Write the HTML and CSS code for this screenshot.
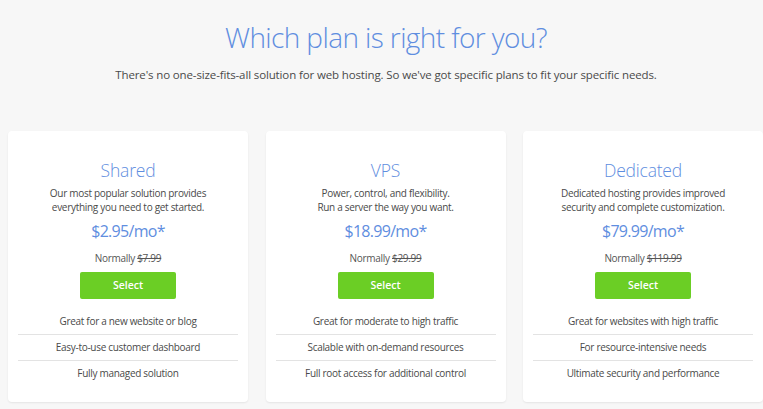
FILE: index.html
```html
<!DOCTYPE html>
<html lang="en">
<head>
<meta charset="utf-8">
<title>Plans</title>
<link rel="stylesheet" href="styles.css">
</head>
<body>
<div class="page">
<header class="intro">
  <h1 class="intro-title">Which plan is right for you?</h1>
  <p class="intro-sub">There's no one-size-fits-all solution for web hosting. So we've got specific plans to fit your specific needs.</p>
</header>
<main class="plans">
  <section class="plan">
    <h2 class="plan-name">Shared</h2>
    <p class="plan-desc">Our most popular solution provides<br>everything you need to get started.</p>
    <p class="plan-price">$2.95/mo*</p>
    <p class="plan-normal">Normally <s>$7.99</s></p>
    <a class="plan-btn" href="#">Select</a>
    <ul class="plan-features">
      <li>Great for a new website or blog</li>
      <li>Easy-to-use customer dashboard</li>
      <li>Fully managed solution</li>
    </ul>
  </section>
  <section class="plan">
    <h2 class="plan-name">VPS</h2>
    <p class="plan-desc">Power, control, and flexibility.<br>Run a server the way you want.</p>
    <p class="plan-price">$18.99/mo*</p>
    <p class="plan-normal">Normally <s>$29.99</s></p>
    <a class="plan-btn" href="#">Select</a>
    <ul class="plan-features">
      <li>Great for moderate to high traffic</li>
      <li>Scalable with on-demand resources</li>
      <li>Full root access for additional control</li>
    </ul>
  </section>
  <section class="plan">
    <h2 class="plan-name">Dedicated</h2>
    <p class="plan-desc">Dedicated hosting provides improved<br>security and complete customization.</p>
    <p class="plan-price">$79.99/mo*</p>
    <p class="plan-normal">Normally <s>$119.99</s></p>
    <a class="plan-btn" href="#">Select</a>
    <ul class="plan-features">
      <li>Great for websites with high traffic</li>
      <li>For resource-intensive needs</li>
      <li>Ultimate security and performance</li>
    </ul>
  </section>
</main>
</div>
</body>
</html>
```
FILE: styles.css
```css
* { box-sizing: border-box; }
html, body { margin: 0; padding: 0; }
body {
  background: #f7f7f7;
  font-family: "Open Sans", "Liberation Sans", sans-serif;
  color: #555;
  height: 409px;
  overflow: hidden;
}
.page {
  width: 772px;
}
.intro {
  text-align: center;
  padding-top: 17px;
}
.intro-title {
  margin: 0;
  font-weight: 300;
  font-size: 28px;
  line-height: 40px;
  color: #5f8ee0;
  letter-spacing: -0.6px;
}
.intro-sub {
  margin: 10px 0 0;
  font-size: 11.5px;
  line-height: 16px;
  color: #4a4a4a;
  letter-spacing: -0.13px;
}
.plans {
  display: flex;
  gap: 17.5px;
  padding: 48px 0 0 8px;
}
.plan {
  flex: 0 0 240px;
  background: #fff;
  border-radius: 4px;
  box-shadow: 0 1px 2px rgba(0,0,0,0.08);
  height: 271px;
  padding: 26px 10px 0;
  text-align: center;
}
.plan-name {
  margin: 0;
  font-weight: 300;
  font-size: 17.5px;
  line-height: 26px;
  color: #5f8ee0;
  letter-spacing: -0.2px;
}
.plan-desc {
  margin: 3px 0 0;
  font-size: 10px;
  line-height: 14px;
  color: #4a4a4a;
  letter-spacing: -0.3px;
}
.plan-price {
  margin: 5px 0 0;
  font-size: 16px;
  line-height: 24px;
  color: #5f8ee0;
  letter-spacing: -0.7px;
}
.plan-normal {
  margin: 8px 0 0;
  font-size: 10px;
  line-height: 14px;
  color: #555;
  letter-spacing: -0.3px;
}
.plan-btn {
  display: block;
  width: 96px;
  height: 27px;
  margin: 7px auto 0;
  background: #6bce25;
  border-radius: 2px;
  color: #fff;
  font-size: 10.5px;
  font-weight: 600;
  line-height: 27px;
  text-decoration: none;
}
.plan-features {
  list-style: none;
  margin: 10px 0 0;
  padding: 0;
}
.plan-features li {
  font-size: 10px;
  line-height: 25px;
  color: #4a4a4a;
  letter-spacing: -0.3px;
  border-top: 1px solid #e3e3e3;
}
.plan-features li:first-child { border-top: none; }
```
